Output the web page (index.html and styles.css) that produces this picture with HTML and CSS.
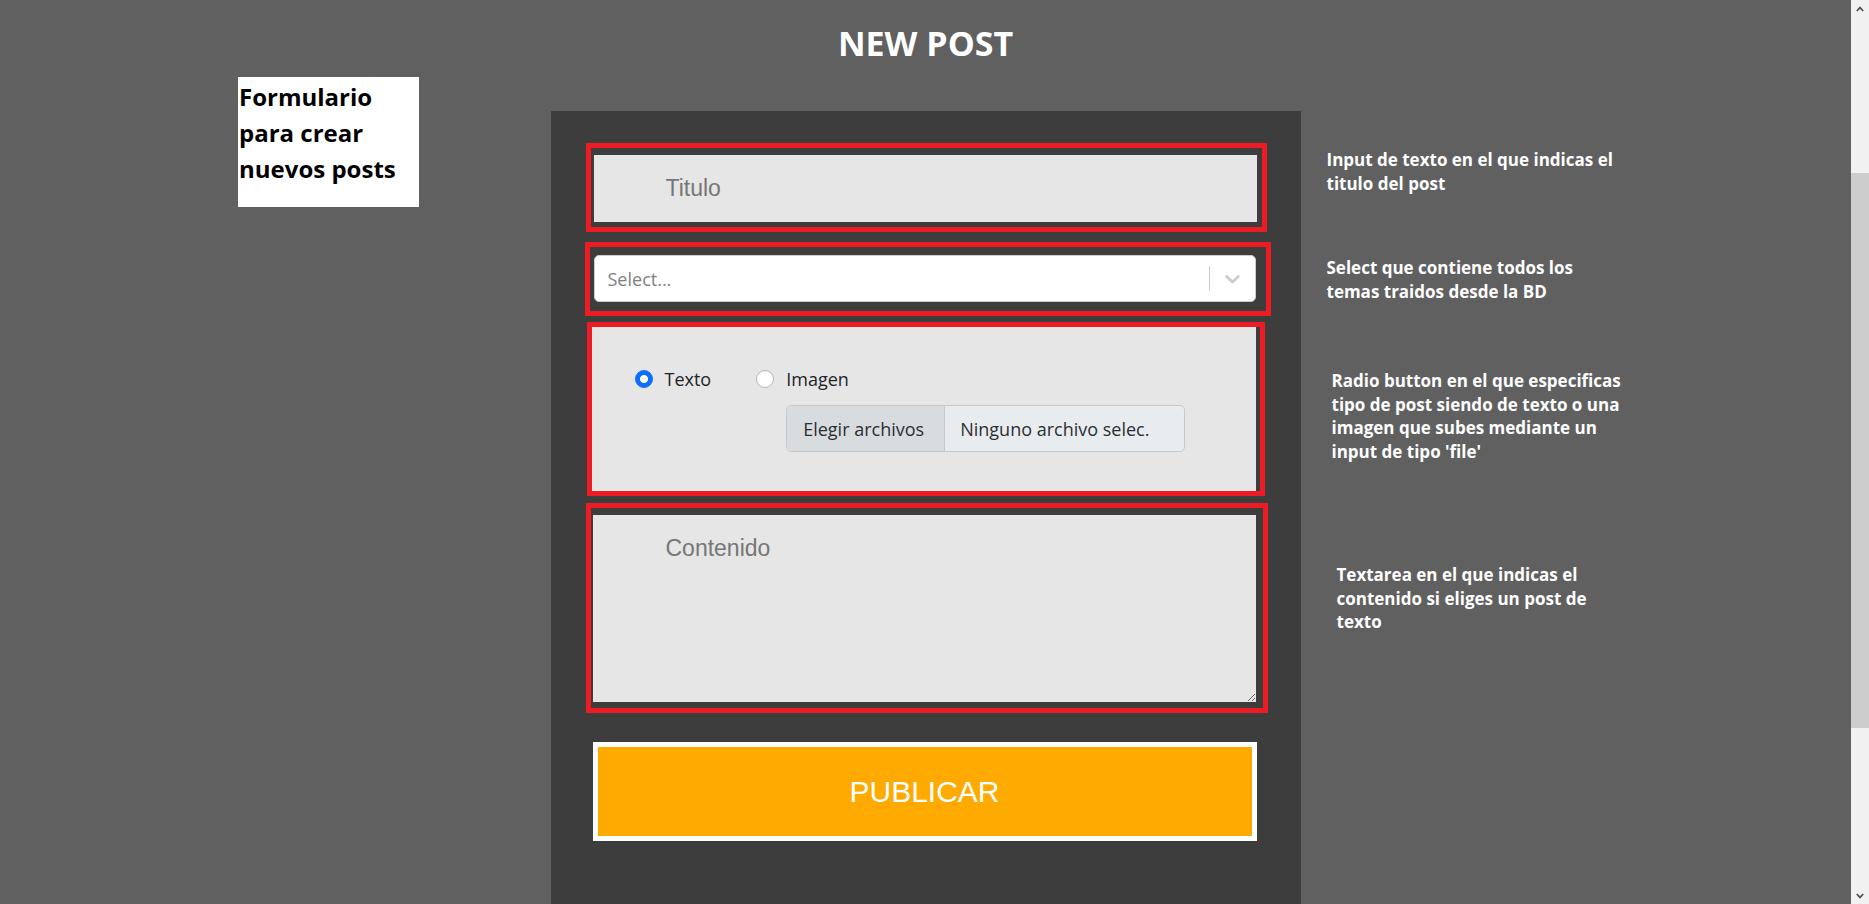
FILE: index.html
```html
<!DOCTYPE html>
<html lang="es">
<head>
<meta charset="utf-8">
<title>New post</title>
<link rel="stylesheet" href="styles.css">
</head>
<body>
<div class="screen">
  <main class="page">
    <h1 class="title">NEW POST</h1>
    <div class="layout">
      <aside class="side side-left">
        <p class="note-box">Formulario<br>para crear<br>nuevos posts</p>
      </aside>
      <section class="panel">
        <form class="post-form">
          <div class="mark mark-title">
            <input class="field-title" type="text" placeholder="Titulo">
          </div>
          <div class="mark mark-select">
            <div class="select">
              <span class="select-placeholder">Select...</span>
              <span class="select-sep"></span>
              <span class="select-arrow">
                <svg width="25" height="25" viewBox="0 0 20 20"><path fill="#cccccc" d="M4.516 7.548c0.436-0.446 1.043-0.481 1.576 0l3.908 3.747 3.908-3.747c0.533-0.481 1.141-0.446 1.574 0 0.436 0.445 0.408 1.197 0 1.615-0.406 0.418-4.695 4.502-4.695 4.502-0.217 0.223-0.502 0.335-0.787 0.335s-0.57-0.112-0.789-0.335c0 0-4.287-4.084-4.695-4.502s-0.436-1.17 0-1.615z"/></svg>
              </span>
            </div>
          </div>
          <div class="mark mark-type">
            <div class="type-box">
              <div class="choices">
                <div class="choice">
                  <input class="radio" type="radio" name="tipo" id="tipo-texto" checked>
                  <label class="choice-label" for="tipo-texto">Texto</label>
                </div>
                <div class="choice">
                  <input class="radio" type="radio" name="tipo" id="tipo-imagen">
                  <label class="choice-label" for="tipo-imagen">Imagen</label>
                  <div class="file">
                    <span class="file-btn">Elegir archivos</span>
                    <span class="file-name">Ninguno archivo selec.</span>
                  </div>
                </div>
              </div>
            </div>
          </div>
          <div class="mark mark-text">
            <textarea class="field-text" placeholder="Contenido"></textarea>
          </div>
          <button class="publish" type="button">PUBLICAR</button>
        </form>
      </section>
      <aside class="side side-right">
        <p class="note note-1">Input de texto en el que indicas el<br>titulo del post</p>
        <p class="note note-2">Select que contiene todos los<br>temas traidos desde la BD</p>
        <p class="note note-3">Radio button en el que especificas<br>tipo de post siendo de texto o una<br>imagen que subes mediante un<br>input de tipo 'file'</p>
        <p class="note note-4">Textarea en el que indicas el<br>contenido si eliges un post de<br>texto</p>
      </aside>
    </div>
  </main>
  <div class="scrollbar">
    <div class="sb-btn">
      <svg width="8" height="6" viewBox="0 0 8 6"><polyline points="0.8,5 4,1.6 7.2,5" fill="none" stroke="#505050" stroke-width="1.7"/></svg>
    </div>
    <div class="sb-track"><div class="sb-thumb"></div></div>
    <div class="sb-btn">
      <svg width="8" height="6" viewBox="0 0 8 6"><polyline points="0.8,1 4,4.4 7.2,1" fill="none" stroke="#505050" stroke-width="1.7"/></svg>
    </div>
  </div>
</div>
</body>
</html>
```

FILE: styles.css
```css
body {
  margin: 0;
  background: #606060;
  font-family: "Open Sans", sans-serif;
}

.screen {
  display: flex;
  height: 904px;
  overflow: hidden;
}

.page {
  flex: 1;
  min-width: 0;
}

.title {
  margin: 20px 0 0;
  text-align: center;
  color: #ffffff;
  font: 700 34px/46px "Open Sans", sans-serif;
}

.layout {
  display: grid;
  grid-template-columns: 1fr 750px 1fr;
  align-items: start;
}

.side-left {
  padding: 11px 0 0 238px;
}

.note-box {
  margin: 0;
  width: 181px;
  height: 130px;
  box-sizing: border-box;
  padding: 2px 0 0 1px;
  background: #ffffff;
  color: #000000;
  font: 700 24px/36px "Open Sans", sans-serif;
}

.panel {
  margin-top: 45px;
  height: 820px;
  box-sizing: border-box;
  padding-top: 32px;
  background: #3d3d3d;
}

.post-form {
  margin: 0;
}

.mark {
  border: 5px solid #ed1c24;
  box-sizing: border-box;
}

.mark-title {
  margin-left: 35px;
  width: 681px;
  padding: 7px 5px 5px 3px;
}

.field-title {
  display: block;
  width: 100%;
  height: 67px;
  box-sizing: border-box;
  margin: 0;
  border: 0;
  padding: 0 0 0 72px;
  background: #e6e6e6;
  color: #333333;
  font: 23px "Liberation Sans", Arial, sans-serif;
  outline: none;
}

.field-title::placeholder,
.field-text::placeholder {
  color: #767676;
}

.mark-select {
  margin: 10px 0 0 34px;
  width: 686px;
  padding: 8px 10px 9px 4px;
}

.select {
  display: flex;
  align-items: center;
  height: 47px;
  box-sizing: border-box;
  background: #ffffff;
  border: 1px solid #cccccc;
  border-radius: 5px;
}

.select-placeholder {
  flex: 1;
  padding-left: 13px;
  color: #808080;
  font-size: 18px;
}

.select-sep {
  width: 1px;
  height: 25px;
  background: #cccccc;
}

.select-arrow {
  display: flex;
  justify-content: center;
  width: 45px;
}

.mark-type {
  margin: 6px 0 0 36px;
  width: 678px;
  padding: 0 4px 0 0;
}

.type-box {
  height: 164px;
  box-sizing: border-box;
  padding: 40px 0 0 43px;
  background: #e6e6e6;
}

.choices {
  display: flex;
  align-items: flex-start;
  gap: 45px;
}

.choice {
  display: grid;
  grid-template-columns: 18px auto;
  column-gap: 12px;
  align-items: center;
  color: #212529;
  font-size: 18px;
  line-height: 24px;
}

.radio {
  appearance: none;
  -webkit-appearance: none;
  margin: 0;
  width: 18px;
  height: 18px;
  box-sizing: border-box;
  border: 1px solid #b5b5b5;
  border-radius: 50%;
  background: #ffffff;
}

.radio:checked {
  border-color: #0d6efd;
  background: radial-gradient(circle, #ffffff 0 3.6px, #0d6efd 4.4px);
}

.file {
  grid-column: 2;
  display: flex;
  margin-top: 14px;
  width: 399px;
  height: 47px;
  box-sizing: border-box;
  border: 1px solid #c6c9cc;
  border-radius: 5px;
  overflow: hidden;
  background: #e9ecef;
  color: #2b2f33;
  font-size: 18px;
}

.file-btn {
  display: flex;
  align-items: center;
  width: 158px;
  box-sizing: border-box;
  padding-left: 16px;
  background: #d9dcdf;
  border-right: 1px solid #c6c9cc;
}

.file-name {
  display: flex;
  align-items: center;
  padding-left: 15px;
}

.mark-text {
  margin: 7px 0 0 35px;
  width: 682px;
  padding: 7px 7px 6px 2px;
}

.field-text {
  display: block;
  width: 100%;
  height: 187px;
  box-sizing: border-box;
  margin: 0;
  border: 0;
  padding: 20px 0 0 73px;
  background: #e6e6e6;
  color: #333333;
  font: 23px "Liberation Sans", Arial, sans-serif;
  outline: none;
}

.publish {
  display: block;
  margin: 29px 0 0 42px;
  width: 664px;
  height: 99px;
  box-sizing: border-box;
  padding: 0;
  border: 5px solid #ffffff;
  background: #ffaa00;
  color: #ffffff;
  font: 30px "Liberation Sans", Arial, sans-serif;
}

.side-right {
  padding-left: 26px;
}

.note {
  margin: 0;
  color: #ffffff;
  font: 700 17px/23.5px "Open Sans", sans-serif;
  white-space: nowrap;
}

.note-1 {
  margin-top: 82px;
}

.note-2 {
  margin-top: 61px;
}

.note-3 {
  margin-top: 66px;
  padding-left: 5px;
}

.note-4 {
  margin-top: 100px;
  padding-left: 10px;
}

.scrollbar {
  display: flex;
  flex-direction: column;
  width: 18px;
  background: #f1f1f1;
}

.sb-btn {
  display: flex;
  align-items: center;
  justify-content: center;
  height: 17px;
}

.sb-track {
  flex: 1;
  padding-top: 156px;
}

.sb-thumb {
  height: 555px;
  background: #cdcdcd;
}
```
